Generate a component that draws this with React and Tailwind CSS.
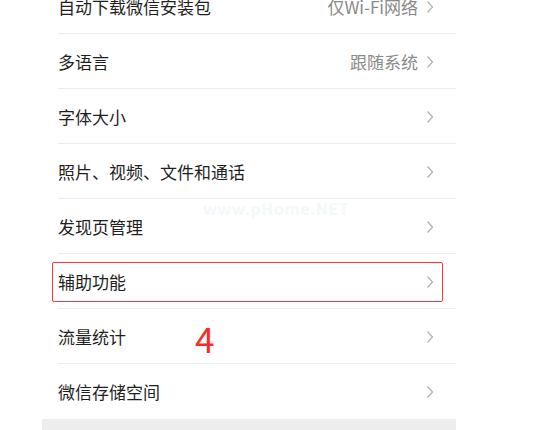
import React from "react";

const rows = [
  { label: "自动下载微信安装包", value: "仅Wi-Fi网络" },
  { label: "多语言", value: "跟随系统" },
  { label: "字体大小" },
  { label: "照片、视频、文件和通话" },
  { label: "发现页管理", watermark: true },
  { label: "辅助功能", boxed: true },
  { label: "流量统计", mark: "4" },
  { label: "微信存储空间" },
];

const Chevron = () => (
  <svg width="8" height="14" viewBox="0 0 8 14" className="shrink-0">
    <path d="M1.5 1.5 L6.5 7 L1.5 12.5" fill="none" stroke="#b3b3b3" strokeWidth="1.3" />
  </svg>
);

const Row = ({ row, last }) => (
  <div className="relative h-[55px]">
    <div className="flex h-full items-center pl-4 pr-[22px]">
      <span className="flex-1 text-[17px] text-[#1f1f1f]">{row.label}</span>
      {row.value && <span className="mr-[8px] text-[17px] text-[#8a8a8a]">{row.value}</span>}
      <Chevron />
    </div>
    {!last && <div className="absolute bottom-0 left-4 right-0 h-px bg-[#ededed]" />}

    {row.watermark && (
      <div className="absolute left-[161px] top-[-3px] text-[16px] font-bold tracking-[0.5px] text-[#f1fafa]">
        www.pHome.NET
      </div>
    )}
    {row.boxed && (
      <div className="absolute left-[10px] right-[13px] top-[8px] bottom-[7px] rounded-[2px] border-[1.5px] border-[#ee3a3a]" />
    )}
    {row.mark && (
      <div className="absolute left-[153px] top-[9px] text-[35px] leading-[40px] font-normal text-[#ff2a1f]">
        {row.mark}
      </div>
    )}
  </div>
);

export default function App() {
  return (
    <div
      className="h-[430px] w-[539px] overflow-hidden bg-white"
      style={{ fontFamily: '"Noto Sans CJK SC", "Noto Sans", sans-serif' }}
    >
      <div className="ml-[42px] mt-[-21px] w-[414px]">
        {rows.map((row, i) => (
          <Row key={row.label} row={row} last={i === rows.length - 1} />
        ))}
        <div className="h-[20px] bg-[#ededed]" />
      </div>
    </div>
  );
}
